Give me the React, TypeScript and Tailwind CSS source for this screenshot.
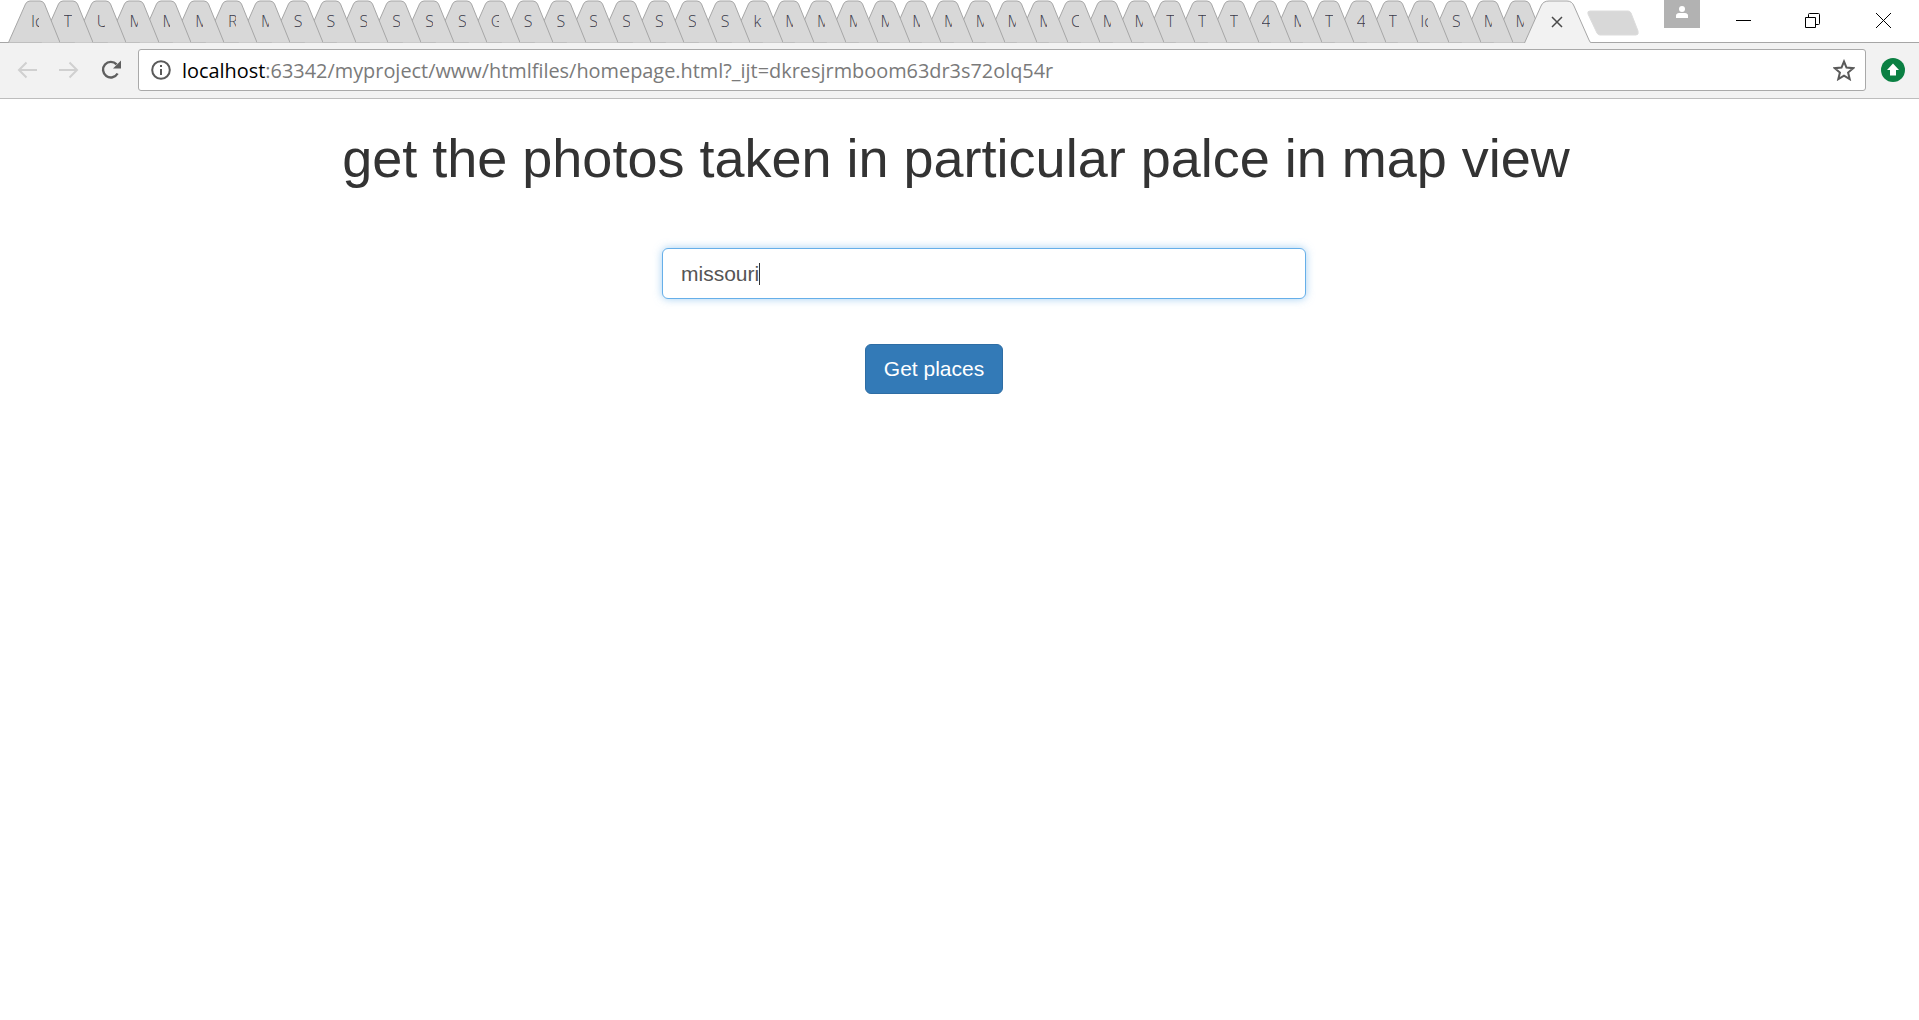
import React from "react";

const tabLabels = [
  "Ic", "T", "U", "M", "M", "M", "R", "M", "S", "S", "S", "S", "S", "S", "G", "S", "S", "S", "S", "S", "S", "S",
  "k", "M", "M", "M", "M", "M", "M", "M", "M", "M", "C", "M", "M", "T", "T", "T", "4", "M", "T", "4", "T", "Ic", "S", "M", "M",
];

const Tab = ({ label, index }: { label: string; index: number }) => (
  <div
    className={`relative h-[43px] w-[52px] shrink-0 ${index < 22 ? "-mr-[19.17px]" : index === 46 ? "-mr-[21px]" : "-mr-[20.25px]"}`}
    style={{ zIndex: 60 - index }}
  >
    <svg className="absolute inset-0" width="52" height="43" viewBox="0 0 52 43">
      <path
        d="M0.5 42.5L17.5 4Q19 1 22 1H32Q35 1 36.5 4L52 42.5"
        fill="#d8d8d8"
        stroke="#a6a6a6"
        strokeWidth="1"
      />
    </svg>
    <div className="absolute left-[23px] top-[9px] w-[8px] overflow-hidden text-[16px] leading-[25px] font-light text-[#3c3c4c]">
      {label}
    </div>
  </div>
);

const App = () => {
  return (
    <div className="min-h-screen overflow-hidden bg-white font-['Liberation_Sans',sans-serif]">
      {/* Tab strip */}
      <div className="flex h-[43px] items-start border-b border-[#a6a6a6] pl-[8px] font-['Open_Sans',sans-serif]">
        {tabLabels.map((label, i) => (
          <Tab key={i} label={label} index={i} />
        ))}

        {/* Active tab */}
        <div className="relative z-[70] flex h-[44px] w-[68px] shrink-0 items-center justify-center">
          <svg className="absolute inset-0" width="68" height="44" viewBox="0 0 68 44">
            <path
              d="M0.5 43L17 6Q19 1 25 1H43Q48 1 50 6L65 40Q66 43 68 43"
              fill="#f2f2f2"
              stroke="#a6a6a6"
            />
            <path d="M1.5 44H68V43H1.5Z" fill="#f2f2f2" />
          </svg>
          <svg className="relative -mt-[1px] -ml-[1px]" width="12" height="12" viewBox="0 0 12 12">
            <path d="M1 1L11 11M11 1L1 11" stroke="#4a4a4a" strokeWidth="1.5" />
          </svg>
        </div>

        {/* New tab button */}
        <svg className="-ml-[5px] mt-[10px] shrink-0" width="52" height="26" viewBox="0 0 52 26">
          <path
            d="M3 1H41Q43 1 44 3L51 21Q52 25 49 25H13Q11 25 10 23L1 4Q0 1 3 1Z"
            fill="#d8d8d8"
            stroke="#dcdcdc"
          />
        </svg>

        {/* Profile */}
        <div className="ml-[25px] flex h-[28px] w-[36px] shrink-0 items-start justify-center bg-[#b2b2b2] pt-[6px]">
          <svg width="14" height="12" viewBox="0 0 14 12">
            <circle cx="7" cy="3" r="3" fill="#fff" />
            <path d="M1 12V9.5Q1 7.5 4 7H10Q13 7.5 13 9.5V12Z" fill="#fff" />
          </svg>
        </div>

        {/* Window controls */}
        <div className="flex h-[42px] flex-1 items-start">
          <svg className="ml-[36px] mt-[13px]" width="15" height="15" viewBox="0 0 15 15">
            <path d="M0 7.5H15" stroke="#000" />
          </svg>
          <svg className="ml-[54px] mt-[13px]" width="15" height="15" viewBox="0 0 15 15">
            <path d="M.5 4.5H10.5V14.5H.5ZM3.5 4.5V1.5Q3.5 .5 4.5 .5H13.5Q14.5 .5 14.5 1.5V10.5Q14.5 11.5 13.5 11.5H10.5" fill="none" stroke="#000" />
          </svg>
          <svg className="ml-[56px] mt-[13px]" width="15" height="15" viewBox="0 0 15 15">
            <path d="M0 0L15 15M15 0L0 15" stroke="#000" />
          </svg>
        </div>
      </div>

      {/* Toolbar */}
      <div className="flex h-[56px] items-center border-b border-[#bdbdbd] bg-[#f2f2f2] pl-[17px] pr-[14px] pb-[1px] font-['Open_Sans',sans-serif]">
        <svg width="20" height="18" viewBox="0 0 20 18" fill="none" stroke="#d0d0d0" strokeWidth="2">
          <path d="M20 9H2M9.5 1.5L2 9L9.5 16.5" />
        </svg>
        <svg className="ml-[22px]" width="20" height="18" viewBox="0 0 20 18" fill="none" stroke="#d0d0d0" strokeWidth="2">
          <path d="M0 9H18M10.5 1.5L18 9L10.5 16.5" />
        </svg>
        <svg className="ml-[22px]" width="20" height="20" viewBox="0 0 20 20" fill="none">
          <path d="M16.6 13.5A7.8 7.8 0 1 1 15.6 4.4" stroke="#5f5f5f" strokeWidth="2.4" />
          <path d="M20 0.5V8.5H12Z" fill="#5f5f5f" />
        </svg>

        {/* Omnibox */}
        <div className="ml-[17px] flex h-[42px] flex-1 items-center rounded-[3px] border border-[#a9a9a9] bg-white pl-[12px] pr-[10px]">
          <svg width="20" height="20" viewBox="0 0 20 20" fill="none">
            <circle cx="10" cy="10" r="8.8" stroke="#5a5a5a" strokeWidth="2" />
            <path d="M9 9H11V15H9ZM9 5H11V7H9Z" fill="#5a5a5a" />
          </svg>
          <div className="ml-[11px] mt-[1px] flex-1 text-[19.9px] whitespace-nowrap text-[#7a7a7a]">
            <span className="text-black">localhost</span>:63342/myproject/www/htmlfiles/homepage.html?_ijt=dkresjrmboom63dr3s72olq54r
          </div>
          <svg width="22" height="22" viewBox="0 0 22 22" fill="none">
            <path
              d="M11 2.5L13.5 8.6L20.2 9.2L15.1 13.6L16.7 20.1L11 16.6L5.3 20.1L6.9 13.6L1.8 9.2L8.5 8.6Z"
              stroke="#5a5a5a"
              strokeWidth="2"
            />
          </svg>
        </div>

        <svg className="ml-[15px]" width="24" height="24" viewBox="0 0 24 24">
          <circle cx="12" cy="12" r="12" fill="#0b8043" />
          <path d="M12 5.5L18 12H15V17.5H9V12H6Z" fill="#fff" />
        </svg>
      </div>

      {/* Page */}
      <div className="flex flex-col items-center">
        <h1 className="mr-[7px] mt-[30px] text-[54px] leading-[59px] font-normal text-[#333]">
          get the photos taken in particular palce in map view
        </h1>
        <div className="ml-[49px] mt-[60px] flex h-[51px] w-[644px] items-center rounded-[6px] border-[1.5px] border-[#66afe9] bg-white pl-[18px] text-[21px] text-[#555] shadow-[0_0_8px_rgba(102,175,233,0.6)]">
          missouri
          <span className="h-[22px] w-px bg-[#333]" />
        </div>
        <button className="mr-[51px] mt-[45px] h-[50px] w-[138px] rounded-[6px] border border-[#2e6da4] bg-[#337ab7] text-[21px] text-white">
          Get places
        </button>
      </div>
    </div>
  );
};

export default App;
